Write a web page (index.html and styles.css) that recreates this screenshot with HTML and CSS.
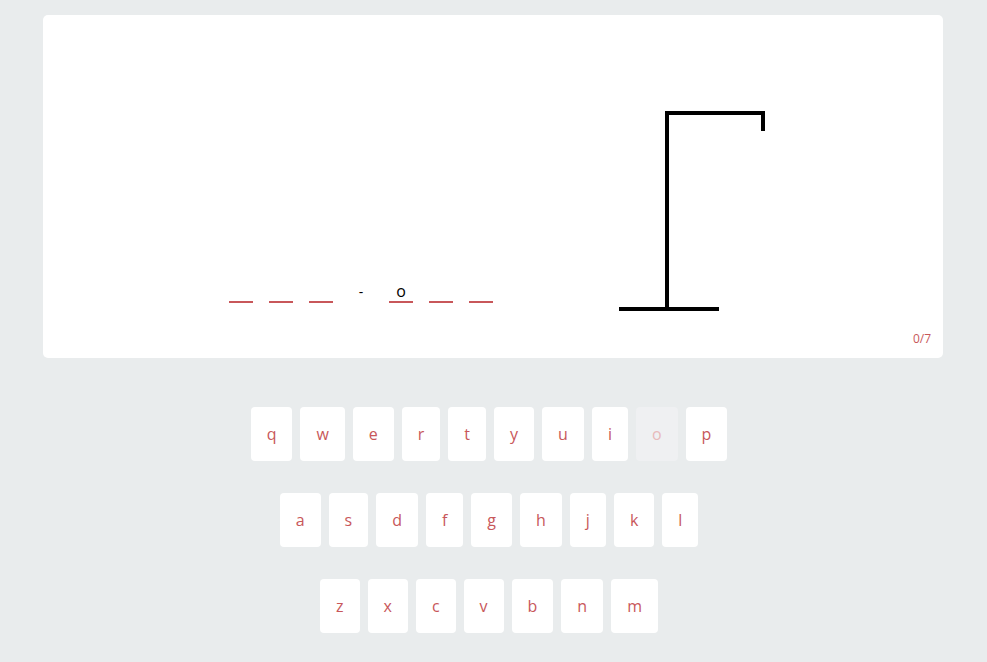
FILE: index.html
```html
<!DOCTYPE html>
<html>
<head>
<meta charset="utf-8">
<link rel="stylesheet" href="styles.css">
</head>
<body>
<main class="game">
  <section class="board">
    <div class="play">
      <div class="word">
        <span class="slot"></span>
        <span class="slot"></span>
        <span class="slot"></span>
        <span class="slot sep">-</span>
        <span class="slot">o</span>
        <span class="slot"></span>
        <span class="slot"></span>
      </div>
      <svg class="gallows" width="146" height="200" viewBox="0 0 146 200">
        <rect x="0" y="196" width="100" height="4" fill="#000"/>
        <rect x="46" y="0" width="4" height="198" fill="#000"/>
        <rect x="46" y="0" width="100" height="4" fill="#000"/>
        <rect x="142" y="0" width="4" height="20" fill="#000"/>
      </svg>
    </div>
    <div class="counter">0/7</div>
  </section>
  <section class="keyboard">
    <div class="row">
      <button class="key">q</button><button class="key">w</button><button class="key">e</button><button class="key">r</button><button class="key">t</button><button class="key">y</button><button class="key">u</button><button class="key">i</button><button class="key used">o</button><button class="key">p</button>
    </div>
    <div class="row">
      <button class="key">a</button><button class="key">s</button><button class="key">d</button><button class="key">f</button><button class="key">g</button><button class="key">h</button><button class="key">j</button><button class="key">k</button><button class="key">l</button>
    </div>
    <div class="row">
      <button class="key">z</button><button class="key">x</button><button class="key">c</button><button class="key">v</button><button class="key">b</button><button class="key">n</button><button class="key">m</button>
    </div>
  </section>
</main>
</body>
</html>
```
FILE: styles.css
```css
html, body {
  margin: 0;
  padding: 0;
  background: #e9eced;
  font-family: "Open Sans", "Noto Sans", sans-serif;
}
body {
  padding-top: 15px;
}
.game {
  display: flex;
  flex-direction: column;
  align-items: center;
  padding-right: 1px;
}
.board {
  width: 900px;
  height: 343px;
  box-sizing: border-box;
  background: #fff;
  border-radius: 5px;
  padding: 96px 12px 0 186px;
  display: flex;
  flex-direction: column;
}
.play {
  display: flex;
  align-items: flex-end;
  gap: 126px;
}
.word {
  display: flex;
  gap: 16px;
  margin-bottom: 8px;
}
.slot {
  width: 24px;
  height: 20px;
  line-height: 20px;
  font-size: 16px;
  text-align: center;
  color: #000;
  border-bottom: 2px solid #c8575a;
}
.slot.sep {
  border-bottom-color: transparent;
  font-size: 14px;
  line-height: 21px;
  height: 20px;
}
.gallows {
  display: block;
  overflow: visible;
}
.counter {
  margin-top: 20px;
  align-self: flex-end;
  font-size: 12px;
  line-height: 16px;
  color: #c8575a;
}
.keyboard {
  margin-top: 49px;
  display: flex;
  flex-direction: column;
  gap: 32px;
}
.row {
  display: flex;
  justify-content: center;
}
.key {
  height: 54px;
  margin: 0 8px 0 0;
  padding: 0 16px;
  border: none;
  border-radius: 4px;
  background: #fff;
  color: #c8575a;
  font-family: "Open Sans", "Noto Sans", sans-serif;
  font-size: 16px;
  line-height: 20px;
}
.key.used {
  background: #eff0f2;
  color: #e8babb;
}
```
